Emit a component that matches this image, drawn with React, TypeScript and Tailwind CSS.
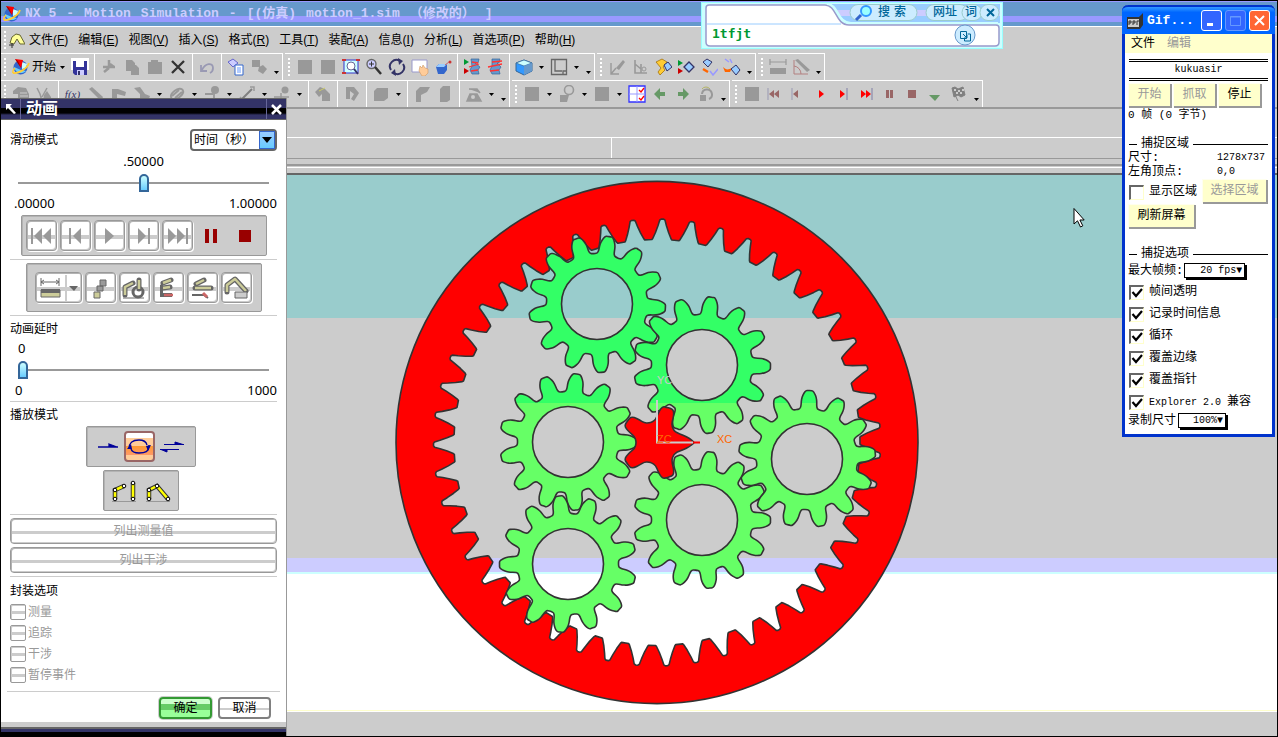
import React, {useState} from "react";

const CJK = "font-['Liberation_Sans','Noto_Sans_CJK_SC',sans-serif]";
const MONO = "font-['Liberation_Mono','Noto_Sans_CJK_SC',monospace]";

type Point = [number, number]; // radius, sideways offset from the tooth axis

// Outline of a gear; profile(k) gives one half of tooth k, root to tip
const gearPath = (cx: number, cy: number, teeth: number, phase: number, profile: (k: number) => Point[], smooth = true) => {
    const pts: Point[] = [];
    for (let k = 0; k < teeth; k++) {
        const axis = ((phase + (k * 360) / teeth) * Math.PI) / 180;
        const half = profile(k);
        const all: Point[] = [...half.map(([r, o]): Point => [r, -o]), ...[...half].reverse()];
        all.forEach(([r, o]) => {
            const a = axis + o / r;
            pts.push([cx + r * Math.cos(a), cy + r * Math.sin(a)]);
        });
    }
    if (!smooth) return `M${pts.map(([x, y]) => `${x.toFixed(2)} ${y.toFixed(2)}`).join("L")}Z`;
    const mid = (a: Point, b: Point) => `${((a[0] + b[0]) / 2).toFixed(2)} ${((a[1] + b[1]) / 2).toFixed(2)}`;
    let d = `M${mid(pts[pts.length - 1], pts[0])}`;
    pts.forEach((p, i) => {
        d += `Q${p[0].toFixed(2)} ${p[1].toFixed(2)} ${mid(p, pts[(i + 1) % pts.length])}`;
    });
    return d + "Z";
};

const planetProfile = (): Point[] => [[50.5, 11], [51, 8.6], [54, 7.8], [58, 7.8], [62, 7.2], [66, 5.4], [68.5, 3.4], [68.5, 1.5]];
const ringProfile = (): Point[] => [[203, 10], [204, 9.2], [210, 6.6], [217, 4.2], [222.5, 2.6], [223.5, 1.2]];
const sunProfile = (k: number): Point[] =>
    k === 0 ? [[21, 12], [22, 10], [27, 7.6], [33, 4], [37, 0.5]] : [[21, 12], [23, 8.5], [29, 8], [34, 7], [36.5, 5], [36.5, 2]];

const planets = [
    {x: 597, y: 304, phase: 3.3},
    {x: 702, y: 365, phase: 1},
    {x: 568, y: 442, phase: 0.4},
    {x: 702, y: 520, phase: 0.3},
    {x: 807, y: 459, phase: -4.9},
    {x: 568, y: 564, phase: 13.4},
];

const hole = (x: number, y: number, r: number) => `M${x - r} ${y}a${r} ${r} 0 1 0 ${2 * r} 0a${r} ${r} 0 1 0 ${-2 * r} 0Z`;

const Viewport = () => (
    <svg className="block h-[561px] w-full flex-1" aria-label="Gear train">
        <defs>
            <linearGradient id="mesh" gradientUnits="userSpaceOnUse" x1="0" y1="175" x2="0" y2="631">
                <stop offset="0.5" stopColor="#33ff66" />
                <stop offset="0.5" stopColor="#66ff66" />
            </linearGradient>
        </defs>
        <g transform="translate(-1 -175)">
            <rect y="175" width="101%" height="143" fill="#99cccc" />
            <rect y="318" width="101%" height="240" fill="#cccccc" />
            <rect y="558" width="101%" height="14" fill="#ccccff" />
            <rect y="572" width="101%" height="2" fill="#ccffff" />
            <rect y="574" width="101%" height="138" fill="#ffffff" />
            <rect y="710" width="101%" height="1" fill="#ffffcc" />
            <rect y="712" width="101%" height="40" fill="#cccccc" />
            <g stroke="#333333" strokeWidth="1.6" fillRule="evenodd" strokeLinejoin="round">
                <path d={hole(657, 442.5, 261) + gearPath(657, 442.5, 47, 3.3, ringProfile, false)} fill="#ff0000" />
                {planets.map((p) => (
                    <path key={`${p.x}-${p.y}`} d={gearPath(p.x, p.y, 13, p.phase, planetProfile) + hole(p.x, p.y, 35.5)} fill="url(#mesh)" />
                ))}
                <path d={gearPath(657, 442.5, 5, 0, sunProfile)} fill="#ff0000" />
            </g>
            <path d="M657 400V442.500H693" fill="none" stroke="#cccccc" strokeWidth="2" />
            <path d="M693 442.500h7" stroke="#ff0000" strokeWidth="2" />
            <g className="font-['Liberation_Sans',sans-serif] text-[11px]">
                <text x="657" y="384" fill="#cccccc">YC</text>
                <text x="657" y="443" fill="#ff6600">ZC</text>
                <text x="717" y="443" fill="#ff6600">XC</text>
            </g>
            <path d="M1074 208.500V224l3.500-3.200 3 6.200 2.300-1.200-2.900-5.800h4.300Z" fill="#fff" stroke="#000" />
        </g>
    </svg>
);

const Ico = ({children, size = 18}: {children: React.ReactNode; size?: number}) => (
    <svg width={size} height={size} viewBox="0 0 18 18" fill="none" aria-hidden="true">{children}</svg>
);

const NxLogo = () => (
    <Ico>
        <circle cx="8.500" cy="9.500" r="7" fill="#3366cc" />
        <path d="M2 9c1 6 8 8 12 4l-5-1Z" fill="#66ccff" />
        <path d="M10 4l5 2-1 4-4 1Z" fill="#ccffff" />
        <path d="M3 1l8 1-2 8Z" fill="#ff0000" />
        <path d="M3 1l3 2 3 7Z" fill="#990000" />
        <path d="M1 15c5 1 14-4 16-10" stroke="#ffcc33" strokeWidth="1.800" />
        <path d="M1 15c-1-2 0-3 2-5" stroke="#ffcc33" strokeWidth="1.400" />
    </Ico>
);

const G = "#999999";

const icons: Record<string, React.ReactNode> = {
    nx: <NxLogo />,
    save: <Ico><path d="M0 0h18v12H0Z" fill="#fff" /><path d="M2 3h14v14H4l-2-2Z" fill="#333399" /><path d="M5 3h8v6H5Z" fill="#fff" /><path d="M6 12h7v5H6Z" fill="#ccccff" /><path d="M7 13h2v4H7Z" fill="#333366" /></Ico>,
    cut: <Ico><path d="M9 2v8M9 10l-5 4M3 9h12M10 6l4 3" stroke={G} strokeWidth="2.500" /></Ico>,
    copy: <Ico><path d="M3 2h6l3 3v8H3ZM8 7h5l3 3v7H8Z" fill={G} /></Ico>,
    paste: <Ico><path d="M2 4h3V2h7v2h4v12H2Z" fill={G} /></Ico>,
    del: <Ico><path d="M3 3l12 12M15 3L3 15" stroke="#333" strokeWidth="2.300" /></Ico>,
    undo: <Ico><path d="M3 7v6h6M4 12c3-7 11-8 11-2 0 2-1 4-3 5" stroke="#9999b3" strokeWidth="1.800" /></Ico>,
    props: <Ico><path d="M1 4l5-3 5 4-5 4Z" fill="#ccccff" stroke="#6666cc" /><path d="M8 7h8v10H8Z" fill="#fff" stroke="#3366cc" /><path d="M10 10h4M10 12h4M10 14h4" stroke="#6699ff" /></Ico>,
    shapes: <Ico><path d="M2 2h8v7H2ZM9 9l4-2 4 4-4 5-5-3Z" fill={G} /></Ico>,
    square: <Ico><path d="M2 2h14v14H2Z" fill={G} /></Ico>,
    fit: <Ico><path d="M2 2h14v13H2Z" fill="#ccffff" stroke="#3333cc" /><circle cx="9" cy="8" r="4" fill="#fff" stroke="#669" /><path d="M12 11l4 5" stroke="#336" strokeWidth="2" /><path d="M0 1h4v2H0ZM14 1h4v2h-4ZM0 14h4v2H0Z" fill="#c33" /></Ico>,
    zoom: <Ico><circle cx="6.500" cy="6" r="4.500" fill="#ccccff" stroke="#666" strokeWidth="1.400" /><path d="M4 6h5M6.500 3.500v5" stroke="#333" /><path d="M10 9l6 7" stroke="#333" strokeWidth="2.500" /></Ico>,
    rotate: <Ico><path d="M3 12A6.500 6.500 0 0 1 12 3M15 6a6.500 6.500 0 0 1-9 9" stroke="#333366" strokeWidth="2" /><path d="M10 0l5 3-4 4ZM8 18l-5-3 4-4Z" fill="#333366" /></Ico>,
    pan: <Ico><path d="M1 2h15v12H1Z" fill="#fff" stroke="#9999cc" /><path d="M9 8l2 2 1-3 2 3 3 1v4l-3 3h-3l-3-5Z" fill="#ffcc99" stroke="#cc9966" strokeWidth=".6" /></Ico>,
    persp: <Ico><path d="M2 9l3-3h8v6l-3 4H4Z" fill="#3366cc" /><path d="M2 9h8l3-3H5Z" fill="#99ccff" /><circle cx="16" cy="4" r="1.500" fill="#c33" /><path d="M11 7l4-3" stroke="#c66" /></Ico>,
    motionA: <Ico><path d="M1 1l5 3-5 3Z" fill="#009933" /><path d="M1 10l5 3-5 3Z" fill="#cc0000" /><path d="M8 1h8l-1 4h-3l5 4-2 3 1 4H9l-2-4 2-4Z" fill="#6699cc" stroke="#336699" strokeWidth=".7" /><path d="M6 9l10-3M8 13l7-1M9 4l6 1" stroke="#f33" strokeWidth="1.300" /></Ico>,
    motionB: <Ico><path d="M6 1h8l-1 4h-2l4 4-2 3 1 4H6l-2-4 2-4Z" fill="#6699cc" stroke="#336699" strokeWidth=".7" /><path d="M2 9l14-3M4 13l9-1M6 4l10-1" stroke="#f33" strokeWidth="1.300" /></Ico>,
    cube: <Ico><path d="M1 5l8-3 8 3v8l-8 4-8-4Z" fill="#3399ff" stroke="#336699" /><path d="M1 5l8-3 8 3-8 3Z" fill="#ccffff" stroke="#336699" strokeWidth=".7" /><path d="M9 8l8-3v8l-8 4Z" fill="#6699cc" /></Ico>,
    view: <Ico><path d="M1.500 1.500h15v15h-15ZM5 1v12h7M17 13h-4v4" stroke="#666" strokeWidth="1.300" /></Ico>,
    axisA: <Ico><path d="M3 5v11h8M3 16l5-6" stroke={G} strokeWidth="1.400" /><path d="M8 10l7-8 2 2-6 8Z" fill={G} /></Ico>,
    axisB: <Ico><path d="M4 2v13h12M4 6l6 5M10 6v9" stroke={G} strokeWidth="1.600" /><circle cx="13" cy="11" r="2" stroke={G} /></Ico>,
    linkA: <Ico><path d="M2 4l6-3 5 3-4 5 2 3-5 5-2-3 3-4Z" fill="#ffcc33" stroke="#996600" strokeWidth=".7" /><path d="M10 7l4-3 4 5-5 4Z" fill="#99ccff" stroke="#336" /></Ico>,
    linkB: <Ico><path d="M1 2l5 3-5 3Z" fill="#009933" /><path d="M1 10l5 3-5 3Z" fill="#cc0000" /><path d="M7 9l5-5 5 5-5 5Z" fill="#99ccff" stroke="#336" strokeWidth="1.300" /></Ico>,
    linkC: <Ico><path d="M3 4l4-3 5 3-4 5Z" fill="#99ccff" stroke="#336" /><path d="M3 11l5 3" stroke="#f60" strokeWidth="2.500" /><path d="M10 13l3 4 5-6" stroke="#9999ff" strokeWidth="1.500" /></Ico>,
    linkD: <Ico><path d="M2 1l4 3M7 1l2 4" stroke="#9999ff" strokeWidth="1.500" /><path d="M0 9c3 3 5 3 9 1l-2 4H2Z" fill="#f60" /><path d="M8 11l5-4 4 5-4 5Z" fill="#99ccff" stroke="#336" /></Ico>,
    measure: <Ico><path d="M1 4h16M1 1v6M17 1v6" stroke={G} strokeWidth="1.200" /><path d="M1 10h16v6H1Z" fill={G} /></Ico>,
    angle: <Ico><path d="M2 2v14h14M2 8a8 8 0 0 1 7 8" stroke="#b38080" /><path d="M3 2l3-1 12 11-3 2Z" fill={G} /></Ico>,
    sketch: <Ico><path d="M1 6l5-4 8 1 3 6v8H6V9H1Z" fill={G} /><path d="M8 8h7M8 11h8M8 14h8" stroke="#ccc" /></Ico>,
    nodes: <Ico><path d="M2 3l3 6 2 7M12 3l-5 9" stroke={G} strokeWidth="1.500" /><path d="M9 10l3-4 4 6v4H8Z" fill={G} /></Ico>,
    stick: <Ico><path d="M2 4l3-2 11 10-2 4Z" fill={G} /></Ico>,
    bracket: <Ico><path d="M2 4h6l8 3-1 4-8-2v7H2Z" fill={G} /></Ico>,
    joint: <Ico><path d="M1 3l6-1 5 7 5 2-2 5H7V9Z" fill={G} /></Ico>,
    spring: <Ico><ellipse cx="9" cy="9" rx="7" ry="4" transform="rotate(-35 9 9)" stroke={G} strokeWidth="2" /><path d="M4 11l7-6M7 13l7-6" stroke={G} strokeWidth="2" /></Ico>,
    pin: <Ico><circle cx="12" cy="5" r="4" fill={G} /><path d="M11 6v11M2 9h8" stroke={G} strokeWidth="1.800" /></Ico>,
    line: <Ico><path d="M4 14L14 4" stroke="#808080" strokeWidth="2" /><path d="M2 12l4 4M12 2h4v4" stroke={G} strokeWidth="1.500" /></Ico>,
    load: <Ico><circle cx="12" cy="5" r="3.500" fill={G} /><path d="M1 12h15M8 8v9" stroke={G} strokeWidth="1.500" /></Ico>,
    arm: <Ico><path d="M1 7l5-5 5 2 5 5v7H8V9L5 12Z" fill={G} /><path d="M5 6l6-3" stroke="#cccc66" /></Ico>,
    loop: <Ico><path d="M3 2h8l5 6-5 8-3-2 3-5-4-3v8H3Z" fill={G} /></Ico>,
    box: <Ico><path d="M2 6l3-3h11v10l-4 3H2Z" fill={G} /></Ico>,
    corner: <Ico><path d="M3 17V6l4-4h10l-3 5-6 3v7Z" fill={G} /></Ico>,
    column: <Ico><path d="M4 4l3-3h7v14l-3 2H4Z" fill={G} /></Ico>,
    plow: <Ico><path d="M2 16l3-7h7l4 7ZM4 4h8l3 4" fill={G} stroke={G} strokeWidth="1.500" /><circle cx="8" cy="12" r="2" fill="#ccc" /></Ico>,
    lasso: <Ico><circle cx="11" cy="5" r="4.500" stroke={G} strokeWidth="1.600" /><path d="M2 10h9l-2 7H2Z" fill={G} /></Ico>,
    checks: <Ico><path d="M1 1h16v16H1Z" fill="#fff" stroke="#3333ff" strokeWidth="1.300" /><path d="M9 1v16M1 9h16" stroke="#9999ff" /><path d="M11 5l2 2 3-4M11 13l2 2 3-4" stroke="#f00" strokeWidth="1.300" /></Ico>,
    prev: <Ico><path d="M3 9l6-6v4h5v4H9v4Z" fill="#669966" /></Ico>,
    next: <Ico><path d="M15 9L9 3v4H4v4h5v4Z" fill="#669966" /></Ico>,
    refresh: <Ico><path d="M5 9a5 5 0 1 1 7 5" stroke={G} strokeWidth="2" /><path d="M5 4a5 5 0 0 1 8 0" stroke="#b3b366" /><path d="M3 10h6v6H3Z" fill={G} /></Ico>,
    first: <Ico><path d="M2 3v12" stroke="#9999b3" /><path d="M8 5v8l-5-4ZM13 5v8L8 9Z" fill="#996666" /></Ico>,
    back: <Ico><path d="M3 3v12" stroke="#9999b3" /><path d="M9 5v8L4 9Z" fill="#996666" /></Ico>,
    play: <Ico><path d="M7 5v8l5-4Z" fill="#f00" /></Ico>,
    step: <Ico><path d="M5 5v8l5-4Z" fill="#f00" /><path d="M12 3v12" stroke="#9999b3" strokeWidth="1.500" /></Ico>,
    last: <Ico><path d="M3 5v8l5-4ZM8 5v8l5-4Z" fill="#f00" /><path d="M14 3v12" stroke="#9999b3" strokeWidth="1.500" /></Ico>,
    pause: <Ico><path d="M5 5h3v8H5ZM9 5h3v8H9Z" fill="#996666" /></Ico>,
    stop: <Ico><path d="M4 5h8v8H4Z" fill="#996666" /></Ico>,
    drop: <Ico><path d="M2 10h11l-5 6Z" fill="#669966" /></Ico>,
    flag: <Ico><path d="M2 3l3-1 3 2 5-2 2 8-4 2-3-2-4 2ZM5 10l3 6" fill="#808080" stroke="#808080" /><path d="M4 4h2v2H4ZM8 5h2v2H8ZM12 4h2v2h-2ZM6 7h2v2H6ZM10 7h2v2h-2Z" fill="#ccc" /></Ico>,
};

// "v" is a drop-down arrow, "V" the overflow arrow at the foot of a group
const rowOne = [
    "nx start v save | cut copy paste del | undo | props shapes V",
    "square square fit zoom rotate pan persp | motionA motionB | cube v view v V",
    "axisA axisB linkA linkB linkC linkD V",
    "measure angle V",
];
const rowTwo = [
    "sketch nodes | fx stick bracket joint v spring v pin v line v load v | arm | loop | box v | corner column | plow v V",
    "square v lasso v square v checks prev next refresh V",
    "square first back play step last pause stop drop flag V",
];

const Grip = () => (
    <span className="flex w-2 flex-none flex-col items-center justify-center gap-[2px]">
        {[0, 1, 2, 3, 4].map((n) => <span key={n} className="h-[2px] w-[2px] bg-white" />)}
    </span>
);

const Tool = ({name}: {name: string}) => {
    if (name === "|") return <span className="flex w-[6px] justify-center"><span className="w-px bg-white" /></span>;
    if (name === "v" || name === "V") {
        return (
            <button aria-label="More" className={`flex w-3 justify-center ${name === "v" ? "items-center" : "items-end pb-[6px]"}`}>
                <svg width="5" height="3" aria-hidden="true"><path d="M0 0h5L2.500 3Z" /></svg>
            </button>
        );
    }
    if (name === "start") return <button className="w-6 text-xs whitespace-nowrap">开始</button>;
    if (name === "fx") return <button className="w-[23px] font-['Liberation_Serif',serif] text-[11px] text-[#333366] italic">f(x)</button>;
    return <button aria-label={name} className="flex w-[23px] items-center justify-center">{icons[name]}</button>;
};

const Toolbar = ({groups}: {groups: string[]}) => (
    <div className="flex h-[27px] gap-[2px]">
        {groups.map((group, i) => (
            <div key={i} className="flex flex-none border-t border-r border-white">
                <Grip />
                {group.split(" ").map((name, n) => <Tool key={n} name={name} />)}
            </div>
        ))}
    </div>
);

const menus = [["文件", "F"], ["编辑", "E"], ["视图", "V"], ["插入", "S"], ["格式", "R"], ["工具", "T"], ["装配", "A"], ["信息", "I"], ["分析", "L"], ["首选项", "P"], ["帮助", "H"]];

const SearchBox = () => (
    <section className="absolute top-px left-[700px] grid h-[47px] w-[302px] text-[#006699]">
        <svg className="[grid-area:1/1]" width="302" height="47" aria-hidden="true">
            <rect x=".5" y=".5" width="301" height="46" fill="#ccffff" stroke="#99ffff" />
            <path d="M130 2h169v19H145Z" fill="#99ccff" />
            <path d="M135 8h164v6H140Z" fill="#ccccff" />
            <path d="M5 6q0-3 3-3h116c12 0 10 20 24 20h147q3 0 3 3v14q0 4-4 4H9q-4 0-4-4Z" fill="#fff" stroke="#9999cc" strokeWidth="1.5" />
            <path d="M6 22h134" stroke="#99ccff" />
            <path d="M126 2c12 0 10 19 24 19h147" stroke="#ccffff" strokeWidth="2" fill="none" />
            <g fill="#ccecff" stroke="#99cccc"><rect x="149" y="2.500" width="67" height="16" rx="8" /><rect x="225" y="2.500" width="42" height="16" rx="8" /><rect x="261" y="2.500" width="20" height="16" rx="8" /><rect x="279" y="2.500" width="19" height="16" rx="8" /></g>
            <path d="M155 18l5-5" stroke="#3366cc" strokeWidth="3" />
            <circle cx="165" cy="9" r="5" fill="#99ffff" stroke="#3399ff" strokeWidth="2" />
            <circle cx="264" cy="33" r="10" fill="#ccecff" stroke="#6699cc" />
            <path d="M259.500 29.500h6v7h-6ZM263.500 37v2h6v-7h-3M262 32l4 4M266 33v3h-3" fill="none" stroke="#006699" />
        </svg>
        <div className="relative flex flex-col [grid-area:1/1]">
            <div className="flex h-5 items-center justify-end pr-1 text-[12px] font-medium">
                <button className="mr-[27px] flex gap-1"><span>搜</span><span>索</span></button>
                <button className="mr-2">网址</button>
                <button className="mr-1">词</button>
                <button aria-label="Close" className="flex w-[18px] justify-center"><svg width="9" height="9"><path d="M1 1l7 7M8 1L1 8" stroke="#006699" strokeWidth="2" /></svg></button>
            </div>
            <p className="pt-1 pl-[11px] font-['DejaVu_Sans_Mono',monospace] text-[13px] leading-4 font-bold text-[#009933]">1tfjt</p>
        </div>
    </section>
);

const Rule = () => <hr className="mt-[3px] border-0 border-t border-[#cccccc]" />;

const Slider = ({label, value, max, onChange}: {label: string; value: number; max: number; onChange: (n: number) => void}) => (
    <input
        type="range"
        aria-label={label}
        min={0}
        max={max}
        step={max / 100}
        value={value}
        onChange={(e) => onChange(Number(e.target.value))}
        className="mx-2 block h-[18px] appearance-none bg-[linear-gradient(#999,#999)] bg-[length:100%_2px] bg-center bg-no-repeat [&::-webkit-slider-thumb]:h-[18px] [&::-webkit-slider-thumb]:w-[10px] [&::-webkit-slider-thumb]:appearance-none [&::-webkit-slider-thumb]:rounded-t-full [&::-webkit-slider-thumb]:rounded-b-sm [&::-webkit-slider-thumb]:border-2 [&::-webkit-slider-thumb]:border-[#336699] [&::-webkit-slider-thumb]:bg-linear-to-b [&::-webkit-slider-thumb]:from-[#ccffff] [&::-webkit-slider-thumb]:to-[#66ccff]"
    />
);

const Tray = ({className, children}: {className: string; children: React.ReactNode}) => (
    <div className={`mx-auto flex items-center rounded-xs border border-[#999999] bg-[#cccccc] shadow-[inset_1px_1px_0_#b3b3b3] ${className}`}>{children}</div>
);

const FACE = "bg-[linear-gradient(#fff_48%,#ccc_48%,#ccc_62%,#fff_62%)]";

const TrayButton = ({label, wide, children}: {label: string; wide?: boolean; children: React.ReactNode}) => (
    <button aria-label={label} className={`flex h-[31px] flex-none items-center justify-center rounded-sm border border-[#999999] shadow-[inset_1px_1px_0_#b3b3b3,inset_-1px_-1px_0_#ccc,1px_1px_0_#fff] ${FACE} ${wide ? "w-[47px]" : "w-[31px]"}`}>
        <svg width={wide ? 42 : 26} height="26" fill="none" aria-hidden="true">{children}</svg>
    </button>
);

const Limb = ({d}: {d: string}) => (
    <>
        <path d={d} stroke="#666" strokeWidth="5" strokeLinejoin="round" strokeLinecap="round" />
        <path d={d} stroke="#cccc99" strokeWidth="2.500" strokeLinejoin="round" />
    </>
);

const Linkage = ({d, joints}: {d: string; joints: Point[]}) => (
    <button aria-label="Linkage">
        <svg width="26" height="25" fill="none" aria-hidden="true">
            <path d="M1 23.500h24" stroke="#999" />
            <path d={d} stroke="#333" strokeWidth="4.500" />
            <path d={d} stroke="#ffff00" strokeWidth="2.500" />
            <g fill="#fff" stroke="#000">{joints.map(([x, y]) => <circle key={`${x}-${y}`} cx={x} cy={y} r="1.800" />)}</g>
        </svg>
    </button>
);

const packing = ["测量", "追踪", "干涉", "暂停事件"];

const AnimationDialog = () => {
    const [time, setTime] = useState(0.5);
    const [delay, setDelay] = useState(0);

    return (
        <section className="absolute top-[97px] left-0 flex w-[286px] flex-col border-r border-[#999999] bg-white text-xs leading-4 text-black">
            <header className="flex h-[22px] items-stretch border-y border-[#666666] bg-[linear-gradient(#333366_45%,#000_45%,#000_70%,#333366_80%)] text-white">
                <span className="flex w-5 items-center justify-center border-r border-[#666699]">
                    <svg width="12" height="12" aria-hidden="true"><path d="M1 1h6L5 3l6 7-2 1-6-6-2 2Z" fill="#fff" /></svg>
                </span>
                <h2 className="flex-1 pl-[5px] text-base leading-5 font-bold">动画</h2>
                <button aria-label="Close" className="flex w-5 items-center justify-center border-l border-[#666699]">
                    <svg width="11" height="11" aria-hidden="true"><path d="M1 1l9 9M10 1l-9 9" stroke="#fff" strokeWidth="2.500" /></svg>
                </button>
            </header>
            <div className="flex flex-col px-[9px] pt-[9px]">
                <div className="flex items-center justify-between">
                    <label htmlFor="slide-mode">滑动模式</label>
                    <div className="grid">
                        <select id="slide-mode" className="h-[22px] w-[87px] appearance-none rounded-sm border-2 border-[#666666] bg-white pl-[2px] text-xs leading-4 [grid-area:1/1]">
                            <option>时间（秒）</option>
                        </select>
                        <span className="pointer-events-none my-[2px] mr-[2px] flex w-4 items-center justify-center justify-self-end border border-[#3366cc] bg-linear-to-b from-[#99ccff] to-[#66ccff] [grid-area:1/1]">
                            <svg width="10" height="6" aria-hidden="true"><path d="M0 0h10L5 6Z" /></svg>
                        </span>
                    </div>
                </div>
                <div className="flex flex-col pt-[2px] font-['Noto_Sans',sans-serif] text-[13px]">
                    <output className="text-center">.50000</output>
                    <div className="mt-[5px] flex flex-col"><Slider label="Time" value={time} max={1} onChange={setTime} /></div>
                    <div className="mt-[3px] flex justify-between pl-1"><span>.00000</span><span>1.00000</span></div>
                </div>
                <Tray className="mt-1 h-[41px] w-[246px] gap-[3px] pl-[4px]">
                    <TrayButton label="First"><path d="M4 5v16" stroke="#999" strokeWidth="2" /><path d="M14 5v16L6 13ZM23 5v16l-8-8Z" fill="#999" /></TrayButton>
                    <TrayButton label="Step back"><path d="M8 5v16" stroke="#999" strokeWidth="2" /><path d="M19 5v16l-8-8Z" fill="#999" /></TrayButton>
                    <TrayButton label="Play"><path d="M9 5v16l9-8Z" fill="#999" /></TrayButton>
                    <TrayButton label="Step forward"><path d="M19 5v16" stroke="#999" strokeWidth="2" /><path d="M8 5v16l8-8Z" fill="#999" /></TrayButton>
                    <TrayButton label="Last"><path d="M23 5v16" stroke="#999" strokeWidth="2" /><path d="M4 5v16l8-8ZM13 5v16l8-8Z" fill="#999" /></TrayButton>
                    <button aria-label="Pause" className="flex w-[31px] justify-center"><svg width="13" height="14"><path d="M0 0h4v14H0ZM8 0h4v14H8Z" fill="#990000" /></svg></button>
                    <button aria-label="Stop" className="flex w-[31px] justify-center"><svg width="12" height="12"><path d="M0 0h12v12H0Z" fill="#990000" /></svg></button>
                </Tray>
                <Rule />
                <Tray className="mt-[3px] h-[49px] w-[236px] gap-[3px] pl-[8px]">
                    <TrayButton label="Measure" wide>
                        <path d="M4 7h18M4 3v8M22 3v8M7 5L4 7l3 2M19 5l3 2-3 2" stroke="#666" />
                        <path d="M4 15h19v7H4Z" fill="#cccc99" stroke="#666" /><path d="M4 14h19v4H4Z" fill="#666" />
                        <path d="M29 0v26" stroke="#ccc" strokeWidth="2" /><path d="M32 11h9l-4 5Z" fill="#666" />
                    </TrayButton>
                    <TrayButton label="Blocks"><path d="M13 5h6v6h-6ZM10 11h6v5h-6Z" fill="#999" stroke="#666" /><path d="M7 17h6v6H7Z" fill="#cccc99" stroke="#666" /></TrayButton>
                    <TrayButton label="Sequence"><Limb d="M4 20v-8l8-4" /><circle cx="17" cy="17" r="5" stroke="#666" strokeWidth="3" /><Limb d="M18 14V5" /><path d="M2 23h21" stroke="#666" /></TrayButton>
                    <TrayButton label="Stack"><Limb d="M8 8l8-3" /><Limb d="M8 13l7-1" /><path d="M5 10l3-2v10h9v4H5" fill="#666" /><path d="M9 20h9" stroke="#cc6666" strokeWidth="2.500" /></TrayButton>
                    <TrayButton label="Trace"><Limb d="M7 9l8-4" /><Limb d="M6 13h16" /><path d="M3 20h12l4 3" stroke="#666" strokeWidth="2" /><path d="M14 18l4 4" stroke="#cc6666" strokeWidth="3" /></TrayButton>
                    <TrayButton label="Envelope"><Limb d="M4 17v-7l8-6 11 12" /><path d="M12 17h12v6H12Z" fill="#ccc" stroke="#666" /></TrayButton>
                </Tray>
                <Rule />
                <label htmlFor="delay" className="mt-[5px]">动画延时</label>
                <div className="flex flex-col pt-[3px] font-['Noto_Sans',sans-serif] text-[13px]">
                    <output id="delay" className="pl-2">{delay}</output>
                    <div className="mt-[5px] flex flex-col"><Slider label="Delay" value={delay} max={1000} onChange={setDelay} /></div>
                    <div className="mt-[3px] flex justify-between pl-[5px]"><span>0</span><span>1000</span></div>
                </div>
                <Rule />
                <h3 className="mt-[5px]">播放模式</h3>
                <div className="mt-[3px] flex flex-col gap-[3px] pr-[5px]">
                    <Tray className="h-[41px] w-[110px] justify-between px-[10px]">
                        <button aria-label="Play once"><svg width="22" height="10"><path d="M1 5h20M12 2l8 3h-8Z" stroke="#000099" fill="#000099" strokeWidth="1.300" /></svg></button>
                        <button aria-label="Loop" className="flex h-[31px] w-[31px] items-center justify-center rounded-sm border-2 border-[#996666] bg-[linear-gradient(#fff_20%,#fc9_20%,#fc9_50%,#f93_50%,#f96_80%,#fc9_80%)]">
                            <svg width="26" height="20" fill="none"><path d="M3 12C3 5 7 3 13 3c4 0 7 1 8 5M23 8c0 7-4 8-10 8-4 0-7-1-8-4" stroke="#000099" strokeWidth="1.300" /><path d="M1 12l4-5 1 5ZM25 8l-5 1 2 5Z" fill="#000099" /></svg>
                        </button>
                        <button aria-label="Play back and forth"><svg width="26" height="14"><path d="M5 4.500h20M16 2l8 2.500h-8ZM1 9.500h19M8 12L2 9.500h6Z" stroke="#000099" fill="#000099" /></svg></button>
                    </Tray>
                    <Tray className="h-[41px] w-[76px] justify-center gap-2">
                        <Linkage d="M4 21v-9l9-4M22 21V5" joints={[[4, 21], [4, 12], [13, 8], [22, 21], [22, 5]]} />
                        <Linkage d="M4 21v-9l8-4 11 13" joints={[[4, 21], [4, 12], [12, 8], [23, 21]]} />
                    </Tray>
                </div>
                <Rule />
                {["列出测量值", "列出干涉"].map((label) => (
                    <button key={label} disabled className={`mt-[3px] h-[26px] rounded-sm border border-[#999999] text-[#999999] shadow-[inset_1px_1px_0_#b3b3b3,inset_-1px_-1px_0_#ccc] ${FACE}`}>{label}</button>
                ))}
                <Rule />
                <fieldset className="flex flex-col gap-[5px] pt-[6px]">
                    <legend className="contents">封装选项</legend>
                    {packing.map((name) => (
                        <label key={name} className="flex items-center gap-[2px] text-[#999999]">
                            <input type="checkbox" disabled className="h-4 w-4 appearance-none rounded-xs border border-[#999999] bg-[linear-gradient(#fff_45%,#ccc_45%,#ccc_62%,#fff_62%)] shadow-[inset_1px_1px_0_#ccc]" />
                            {name}
                        </label>
                    ))}
                </fieldset>
            </div>
            <div className="mx-[6px] mt-2 flex justify-end gap-[6px] border-t border-[#cccccc] pt-[5px] pr-[9px] pb-[3px]">
                <button className="h-[22px] w-[53px] rounded-sm border-2 border-[#339933] bg-[linear-gradient(#cfc_30%,#6c6_30%,#6c6_60%,#9f9_60%)] shadow-[0_0_0_1px_#ccc]">确定</button>
                <button className={`h-[22px] w-[53px] rounded-sm border-2 border-[#808080] ${FACE}`}>取消</button>
            </div>
            <div className="h-[5px] bg-[#cccccc]" />
            <div className="h-[9px] border-t-2 border-[#666666] bg-[linear-gradient(#336_45%,#000_45%)]" />
        </section>
    );
};

const GIF_BTN = "h-6 border-r-2 border-b-2 border-[#999999] bg-[#ffffcc] text-xs leading-4 shadow-[-1px_-1px_0_#ffffee]";

const CaptureCheck = ({label, checked}: {label: React.ReactNode; checked?: boolean}) => (
    <label className="flex h-[22px] items-center gap-[5px]">
        <span className="grid flex-none">
            <input type="checkbox" defaultChecked={checked} className="peer h-[15px] w-[15px] appearance-none border-t-2 border-r border-b border-l-2 border-t-[#666666] border-r-[#ffffcc] border-b-[#ffffcc] border-l-[#666666] [grid-area:1/1]" />
            <svg className="pointer-events-none relative hidden [grid-area:1/1] peer-checked:block" width="15" height="15" fill="none"><path d="M3.500 7l3.500 4 6-7" stroke="#000" strokeWidth="2.200" /></svg>
        </span>
        <span className="whitespace-pre">{label}</span>
    </label>
);

const Legend = ({children}: {children: React.ReactNode}) => (
    <h3 className="flex items-center gap-1 leading-[14px]">
        <span className="h-px w-2 bg-black" />
        <span>{children}</span>
        <span className="h-px flex-1 bg-black" />
    </h3>
);

const GIF_SELECT = "h-[15px] appearance-none border border-black bg-white pr-[2px] text-right text-[10px] leading-[13px] shadow-[2px_2px_0_#000]";

const GifWindow = () => (
    <section className={`absolute top-1 right-[2px] flex w-[153px] flex-col rounded-t-md border-[3px] border-t-0 border-[#0033cc] bg-white text-xs leading-[14px] text-black ${MONO}`}>
        <header className="-mx-[3px] flex h-[29px] items-center gap-[3px] rounded-t-md border-t-2 border-[#0033cc] bg-linear-to-b from-[#3399ff] via-[#0066ff] via-20% to-[#0066ff] pr-[5px] pl-[5px] text-white">
            <svg width="17" height="16" aria-hidden="true"><path d="M0 4h12l4-4v12l-3 4H0Z" fill="#333" /><path d="M1 6h11v8H1Z" fill="#cccccc" /><path d="M2 12V8h2v2H2M6 12V8h2v2H6M10 12V8h2" stroke="#333" fill="none" /></svg>
            <h2 className="flex-1 text-[13px] font-bold">Gif...</h2>
            <button aria-label="Minimize" className="flex h-[21px] w-[21px] items-center justify-center rounded-[3px] border border-white bg-[#3366ff]"><svg width="13" height="13"><path d="M2 9h6v3H2Z" fill="#fff" /></svg></button>
            <button aria-label="Maximize" className="flex h-[21px] w-[21px] items-center justify-center rounded-[3px] border border-[#6699ff] bg-[#3366ff]"><svg width="13" height="13"><path d="M1.500 2.500h10v9h-10ZM1 3h11" stroke="#6699ff" fill="none" /></svg></button>
            <button aria-label="Close" className="flex h-[21px] w-[21px] items-center justify-center rounded-[3px] border border-white bg-[#ff6633]"><svg width="13" height="13"><path d="M2 2l9 9M11 2l-9 9" stroke="#fff" strokeWidth="2" /></svg></button>
        </header>
        <nav className="flex h-[19px] items-center gap-3 bg-[#ffffcc] pl-[6px]">
            <button>文件</button>
            <button className="text-[#999999]">编辑</button>
        </nav>
        <div className="flex flex-col px-1 pt-[6px]">
            <p className="border-y-3 border-double border-black py-px text-center text-[10px] leading-[14px]">kukuasir</p>
            <div className="mt-[3px] flex gap-[2px] pr-[6px]">
                <button disabled className={`flex-1 text-[#999999] ${GIF_BTN}`}>开始</button>
                <button disabled className={`flex-1 text-[#999999] ${GIF_BTN}`}>抓取</button>
                <button className={`flex-1 ${GIF_BTN}`}>停止</button>
            </div>
            <p className="-ml-px text-[11px] leading-[14px]">0 帧 (0 字节)</p>
            <div className="mt-[15px] flex flex-col">
                <Legend>捕捉区域</Legend>
                <dl className="-ml-px grid grid-cols-[89px_1fr]">
                    <dt className="h-[14px]">尺寸:</dt><dd className="h-[14px] text-[10px]">1278x737</dd>
                    <dt className="h-[14px]">左角顶点:</dt><dd className="h-[14px] text-[10px]">0,0</dd>
                </dl>
                <div className="mt-[1px] flex items-center justify-between">
                    <CaptureCheck label="显示区域" />
                    <button disabled className={`w-[65px] text-[#999999] ${GIF_BTN}`}>选择区域</button>
                </div>
                <button className={`mt-[1px] w-[67px] ${GIF_BTN}`}>刷新屏幕</button>
            </div>
            <div className="mt-[18px] flex flex-col">
                <Legend>捕捉选项</Legend>
                <div className="-ml-px mt-[2px] flex items-center gap-px">
                    <label htmlFor="fps">最大帧频:</label>
                    <select id="fps" className={`w-[61px] ${GIF_SELECT}`}><option>20 fps▼</option></select>
                </div>
                <div className="mt-[3px] flex flex-col">
                    <CaptureCheck label="帧间透明" checked />
                    <CaptureCheck label="记录时间信息" checked />
                    <CaptureCheck label="循环" checked />
                    <CaptureCheck label="覆盖边缘" checked />
                    <CaptureCheck label="覆盖指针" checked />
                    <CaptureCheck label={<><span className="text-[10px]">Explorer 2.0 </span>兼容</>} checked />
                </div>
                <div className="-ml-px flex items-center gap-[2px] pb-[6px]">
                    <label htmlFor="scale">录制尺寸</label>
                    <select id="scale" className={`w-12 ${GIF_SELECT}`}><option>100%▼</option></select>
                </div>
            </div>
        </div>
    </section>
);

const App = () => (
    <main className={`relative flex min-h-screen w-full flex-col overflow-hidden border border-black bg-[#cccccc] text-black ${CJK}`}>
        <header className="flex h-[25px] flex-none items-center gap-1 bg-[linear-gradient(#9999ff_1px,#6699cc_1px,#6699cc_15px,#9999ff_15px,#9999ff_21px,#6699cc_21px)] pl-[2px]">
            <NxLogo />
            <h1 className={`flex gap-[10px] text-[13px] font-bold whitespace-nowrap text-[#ccccff] ${MONO}`}>
                <span>NX 5</span><span>-</span><span>Motion</span><span>Simulation</span><span>-</span><span>[(仿真)</span><span>motion_1.sim</span><span>（修改的）</span><span>]</span>
            </h1>
        </header>
        <nav className="flex h-[27px] flex-none items-center border-t border-white text-xs">
            <Grip />
            <svg width="16" height="17" fill="none" className="mr-1" aria-hidden="true"><path d="M1 11l2-6 4-3 4 1 5 9h-5L8 7l-3 5Z" fill="#ffff99" stroke="#666633" /><path d="M0 13h5M3 11v5" stroke="#333" /></svg>
            <ul className="flex gap-[10px]">
                {menus.map(([name, key]) => (
                    <li key={name}><button className="whitespace-nowrap">{name}(<u>{key}</u>)</button></li>
                ))}
            </ul>
        </nav>
        <Toolbar groups={rowOne} />
        <Toolbar groups={rowTwo} />
        <div className="h-[30px] flex-none border-t-2 border-[#999999]" />
        <div className="flex h-[22px] flex-none border-t border-b border-t-white border-b-[#999999]">
            <div className="w-[611px] border-r border-white" />
        </div>
        <div className="h-[7px] flex-none border-b-2 border-[#999999]" />
        <div className="h-[9px] flex-none border-b-2 border-[#666666] bg-[linear-gradient(#ccc_1px,#fff_1px,#fff_2px,#ccc_2px)]" />
        <Viewport />
        <SearchBox />
        <AnimationDialog />
        <GifWindow />
    </main>
);

export default App;
